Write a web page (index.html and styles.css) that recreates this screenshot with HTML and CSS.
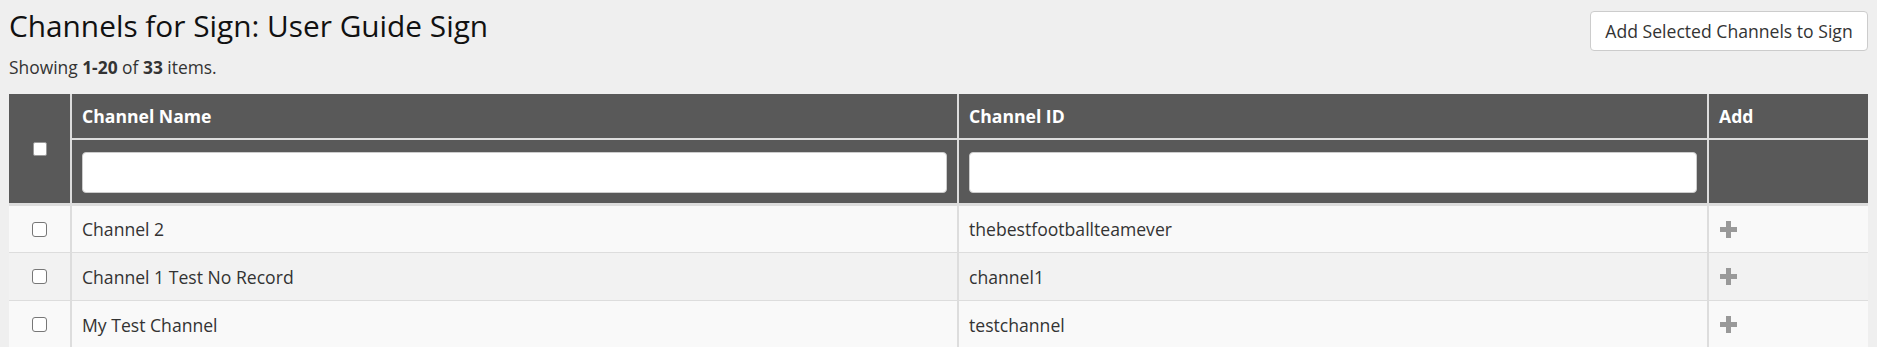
FILE: index.html
```html
<!DOCTYPE html>
<html lang="en">
<head>
<meta charset="utf-8">
<title>Channels for Sign</title>
<link rel="stylesheet" href="styles.css">
</head>
<body>
<div class="page">
  <div class="top">
    <div class="heading">
      <h1 class="title">Channels for Sign: User Guide Sign</h1>
      <div class="summary">Showing <b>1-20</b> of <b>33</b> items.</div>
    </div>
    <button class="btn" type="button">Add Selected Channels to Sign</button>
  </div>
  <table class="grid">
    <colgroup>
      <col class="c-check">
      <col class="c-name">
      <col class="c-id">
      <col class="c-add">
    </colgroup>
    <thead>
      <tr class="head-row">
        <th class="check-cell" rowspan="2"><input type="checkbox" class="cb cb-head"></th>
        <th>Channel Name</th>
        <th>Channel ID</th>
        <th>Add</th>
      </tr>
      <tr class="filter-row">
        <th><input type="text" class="filter"></th>
        <th><input type="text" class="filter"></th>
        <th></th>
      </tr>
    </thead>
    <tbody>
      <tr>
        <td class="check-cell"><input type="checkbox" class="cb"></td>
        <td>Channel 2</td>
        <td>thebestfootballteamever</td>
        <td><svg class="plus" width="17" height="17" viewBox="0 0 17 17"><rect x="6" y="0" width="5" height="17"/><rect x="0" y="6" width="17" height="5"/></svg></td>
      </tr>
      <tr>
        <td class="check-cell"><input type="checkbox" class="cb"></td>
        <td>Channel 1 Test No Record</td>
        <td>channel1</td>
        <td><svg class="plus" width="17" height="17" viewBox="0 0 17 17"><rect x="6" y="0" width="5" height="17"/><rect x="0" y="6" width="17" height="5"/></svg></td>
      </tr>
      <tr>
        <td class="check-cell"><input type="checkbox" class="cb"></td>
        <td>My Test Channel</td>
        <td>testchannel</td>
        <td><svg class="plus" width="17" height="17" viewBox="0 0 17 17"><rect x="6" y="0" width="5" height="17"/><rect x="0" y="6" width="17" height="5"/></svg></td>
      </tr>
    </tbody>
  </table>
</div>
</body>
</html>
```
FILE: styles.css
```css
* { box-sizing: border-box; }

body {
  margin: 0;
  background-color: #efefef;
  font-family: "Open Sans", "DejaVu Sans", sans-serif;
  color: #333;
}

.page {
  padding: 0 9px;
}

.top {
  display: flex;
  justify-content: space-between;
  align-items: flex-start;
}

.title {
  margin: 10px 0 0;
  font-size: 29.8px;
  font-weight: 400;
  line-height: 1.1;
  color: #111;
}

.summary {
  margin-top: 12px;
  font-size: 17.4px;
  line-height: 24px;
  color: #333;
}

.summary b {
  font-weight: 700;
}

.btn {
  margin-top: 11px;
  height: 40px;
  width: 278px;
  padding: 0;
  font-family: "Open Sans", sans-serif;
  font-size: 17.6px;
  color: #333;
  background: #fff;
  border: 1px solid #ccc;
  border-radius: 4px;
}

.grid {
  margin-top: 15px;
  width: 1859px;
  table-layout: fixed;
  border-collapse: collapse;
  font-size: 17.6px;
}

.c-check { width: 62px; }
.c-name { width: 887px; }
.c-id { width: 750px; }
.c-add { width: 160px; }

.grid th {
  background: #595959;
  color: #fff;
  font-weight: 700;
  text-align: left;
  padding: 0 10px;
  border-left: 2px solid #ddd;
  border-right: 2px solid #ddd;
}

.grid th:first-child {
  border-left: none;
}

.grid thead tr:first-child th:last-child,
.filter-row th:last-child {
  border-right: none;
}

.head-row th {
  height: 45px;
  border-bottom: 2px solid #ddd;
}

.head-row th.check-cell {
  border-bottom: 3px solid #ddd;
}

.filter-row th {
  height: 66px;
  padding: 11px 10px 9px 10px;
  border-bottom: 3px solid #ddd;
}

.check-cell {
  text-align: center !important;
  padding: 0 !important;
  vertical-align: middle;
}

.filter {
  display: block;
  width: 100%;
  height: 41px;
  background: #fff;
  border: 1px solid #ccc;
  border-radius: 4px;
}

.grid td {
  height: 48px;
  padding: 0 10px;
  border-left: 2px solid #ddd;
  border-bottom: 1px solid #ddd;
  vertical-align: middle;
  color: #333;
}

.grid td:first-child {
  border-left: none;
}

.grid tbody tr:nth-child(odd) td { background: #f9f9f9; }
.grid tbody tr:nth-child(even) td { background: #f2f2f2; }

.cb {
  appearance: none;
  -webkit-appearance: none;
  display: block;
  margin: 0 auto;
  width: 15px;
  height: 15px;
  background: #fff;
  border: 1px solid #777;
  border-radius: 3px;
}

.cb-head {
  width: 14px;
  height: 14px;
  border: 1px solid #999;
  border-radius: 2px;
}

.plus {
  display: block;
  fill: #999;
  margin-left: 1px;
}
```
